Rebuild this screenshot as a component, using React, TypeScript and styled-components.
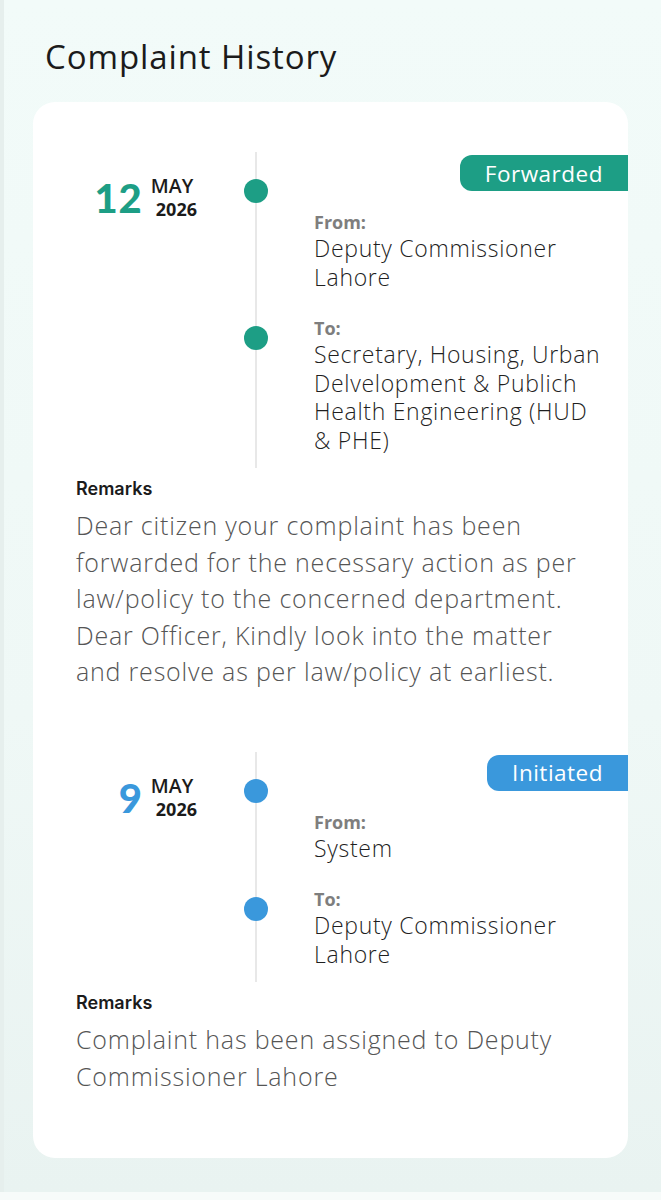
import React from "react";
import styled, { createGlobalStyle } from "styled-components";

const GlobalStyle = createGlobalStyle`
  html, body {
    margin: 0;
    padding: 0;
    background: #f7fbfa;
  }
  body {
    font-family: "Open Sans", "Liberation Sans", sans-serif;
  }
`;

type Status = "forwarded" | "initiated";

const colors: Record<Status, string> = {
  forwarded: "#1d9e85",
  initiated: "#3a98dc",
};

interface HistoryItem {
  day: string;
  month: string;
  year: string;
  status: Status;
  label: string;
  from: string;
  to: string;
  remarks: string;
}

const history: HistoryItem[] = [
  {
    day: "12",
    month: "MAY",
    year: "2026",
    status: "forwarded",
    label: "Forwarded",
    from: "Deputy Commissioner Lahore",
    to: "Secretary, Housing, Urban Delvelopment & Publich Health Engineering (HUD & PHE)",
    remarks:
      "Dear citizen your complaint has been forwarded for the necessary action as per law/policy to the concerned department. Dear Officer, Kindly look into the matter and resolve as per law/policy at earliest.",
  },
  {
    day: "9",
    month: "MAY",
    year: "2026",
    status: "initiated",
    label: "Initiated",
    from: "System",
    to: "Deputy Commissioner Lahore",
    remarks: "Complaint has been assigned to Deputy Commissioner Lahore",
  },
];

const App: React.FC = () => {
  return (
    <Page>
      <GlobalStyle />
      <Title>Complaint History</Title>
      <Card>
        {history.map((item, i) => (
          <Entry key={i}>
            <Timeline>
              <Rail />
              <DateBlock>
                <Day $status={item.status}>{item.day}</Day>
                <MonthYear>
                  <Month>{item.month}</Month>
                  <Year>{item.year}</Year>
                </MonthYear>
              </DateBlock>
              <Badge $status={item.status}>{item.label}</Badge>
              <TopDot $status={item.status} />
              <Party $row={2}>
                <PartyLabel>From:</PartyLabel>
                <PartyName>{item.from}</PartyName>
              </Party>
              <Party $row={3}>
                <PartyLabel>To:</PartyLabel>
                <PartyName>{item.to}</PartyName>
              </Party>
              <ToDot $status={item.status} />
            </Timeline>
            <Remarks>
              <RemarksTitle>Remarks</RemarksTitle>
              <RemarksText>{item.remarks}</RemarksText>
            </Remarks>
          </Entry>
        ))}
      </Card>
    </Page>
  );
};

const Page = styled.div`
  min-height: 1191px;
  box-sizing: border-box;
  padding: 38px 33px 34px;
  background: linear-gradient(180deg, #f2fbf9 0%, #eff8f6 60%, #e9f3f1 100%);
  box-shadow: inset 4px 0 0 #e6efed;
`;

const Title = styled.h1`
  margin: 0 0 26px 12px;
  font-family: "Open Sans", sans-serif;
  font-weight: 500;
  font-size: 33px;
  line-height: 38px;
  letter-spacing: 0.9px;
  color: #1b1b1b;
`;

const Card = styled.div`
  background: #ffffff;
  border-radius: 22px;
  padding: 50px 0 64px;
  display: flex;
  flex-direction: column;
  gap: 62px;
`;

const Entry = styled.div`
  display: flex;
  flex-direction: column;
`;

const Timeline = styled.div`
  display: grid;
  grid-template-columns: 211px 24px 1fr;
  grid-template-rows: auto auto auto;
  padding-bottom: 14px;
`;

const Rail = styled.div`
  grid-column: 2;
  grid-row: 1 / -1;
  justify-self: center;
  width: 2px;
  margin-bottom: -14px;
  background: #e8e8e8;
`;

const DateBlock = styled.div`
  grid-column: 1;
  grid-row: 1 / span 2;
  align-self: start;
  justify-self: end;
  margin: 23px 47px 0 0;
  display: flex;
  align-items: flex-start;
  gap: 8px;
`;

const Day = styled.span<{ $status: Status }>`
  font-family: "Lato", sans-serif;
  font-weight: 900;
  font-size: 40px;
  line-height: 40px;
  letter-spacing: 1px;
  margin-top: 3px;
  color: ${(p) => colors[p.$status]};
`;

const MonthYear = styled.div`
  display: flex;
  flex-direction: column;
  align-items: flex-start;
`;

const Month = styled.span`
  font-family: "Open Sans", sans-serif;
  font-weight: 600;
  font-size: 19.5px;
  line-height: 22px;
  color: #1b1b1b;
`;

const Year = styled.span`
  font-family: "Open Sans", sans-serif;
  font-weight: 700;
  font-size: 18px;
  line-height: 20px;
  margin: 2px 0 0 5px;
  color: #1b1b1b;
`;

const Badge = styled.div<{ $status: Status }>`
  grid-column: 3;
  grid-row: 1;
  justify-self: end;
  margin-top: 3px;
  height: 36px;
  padding: 0 25px;
  box-sizing: border-box;
  display: flex;
  align-items: center;
  border-radius: 12px 0 0 12px;
  background: ${(p) => colors[p.$status]};
  color: #ffffff;
  font-family: "Open Sans", sans-serif;
  font-size: 22.5px;
  letter-spacing: 0.5px;
`;

const Dot = styled.span<{ $status: Status }>`
  grid-column: 2;
  width: 24px;
  height: 24px;
  border-radius: 50%;
  background: ${(p) => colors[p.$status]};
  z-index: 1;
`;

const TopDot = styled(Dot)`
  grid-row: 1;
  align-self: end;
  margin-bottom: -12px;
`;

const ToDot = styled(Dot)`
  grid-row: 3;
  align-self: start;
  margin-top: 35px;
`;

const Party = styled.div<{ $row: number }>`
  grid-column: 3;
  grid-row: ${(p) => p.$row};
  padding: ${(p) => (p.$row === 2 ? "19px" : "25px")} 24px 0 46px;
`;

const PartyLabel = styled.div`
  font-family: "Open Sans", sans-serif;
  font-weight: 700;
  font-size: 18px;
  line-height: 24px;
  color: #7e7e7e;
`;

const PartyName = styled.div`
  font-family: "Open Sans", sans-serif;
  font-weight: 300;
  font-size: 23px;
  line-height: 28.5px;
  letter-spacing: 0.7px;
  color: #1f1f1f;
`;

const Remarks = styled.div`
  margin-top: 9px;
  padding: 0 43px;
`;

const RemarksTitle = styled.div`
  font-family: "Inter", "Open Sans", sans-serif;
  font-weight: 600;
  font-size: 18px;
  line-height: 24px;
  color: #1b1b1b;
  margin-bottom: 6px;
`;

const RemarksText = styled.p`
  margin: 0;
  font-family: "Open Sans", sans-serif;
  font-weight: 300;
  font-size: 25px;
  line-height: 36.5px;
  letter-spacing: 0.8px;
  color: #555555;
`;

export default App;
